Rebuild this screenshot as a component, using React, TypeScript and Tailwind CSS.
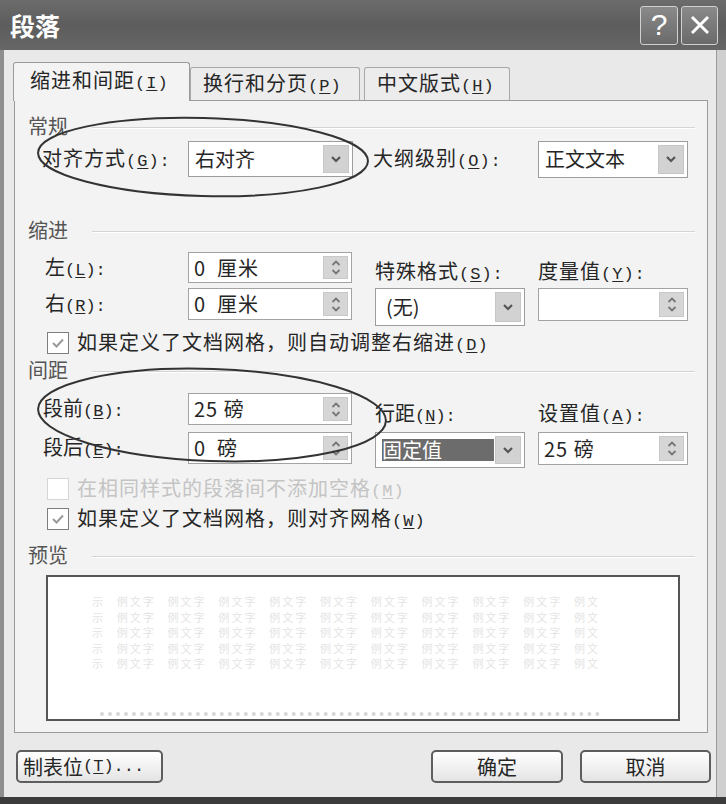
import React from "react";
import clsx from "clsx";

function Key({ k }: { k: string }) {
  return (
    <span className="font-['Liberation_Mono',monospace] text-[17px]">
      (<span className="underline underline-offset-2">{k}</span>)
    </span>
  );
}

function Label({ text, k, colon = true, className }: { text: string; k: string; colon?: boolean; className?: string }) {
  return (
    <span className={clsx("whitespace-nowrap text-[20px] leading-none", className)}>
      {text}
      <Key k={k} />
      {colon && <span className="font-['Liberation_Mono',monospace] text-[17px]">:</span>}
    </span>
  );
}

function DropBtn() {
  return (
    <div className="flex w-[26px] items-center justify-center border border-[#c6c6c6] bg-[#d2d2d2]">
      <svg width="12" height="8" viewBox="0 0 12 8" fill="none" aria-hidden>
        <path d="M2 2l4 4 4-4" stroke="#555" strokeWidth="2.2" />
      </svg>
    </div>
  );
}

function SpinBtn() {
  return (
    <div className="flex w-[25px] flex-col items-center justify-center gap-[3px] border border-[#c8c8c8] bg-[#d6d6d6]">
      <svg width="10" height="6" viewBox="0 0 10 6" fill="none" aria-hidden>
        <path d="M1.5 5L5 1.5 8.5 5" stroke="#777" strokeWidth="1.8" />
      </svg>
      <svg width="10" height="6" viewBox="0 0 10 6" fill="none" aria-hidden>
        <path d="M1.5 1L5 4.5 8.5 1" stroke="#777" strokeWidth="1.8" />
      </svg>
    </div>
  );
}

function Combo({ className, children }: { className: string; children?: React.ReactNode }) {
  return (
    <div className={clsx("flex items-stretch border border-[#9d9d9d] bg-white p-[3px]", className)}>
      <div className="flex flex-1 items-center pl-[3px] text-[20px] leading-none">{children}</div>
      <DropBtn />
    </div>
  );
}

function Spin({ className, value }: { className: string; value?: string }) {
  return (
    <div className={clsx("flex items-stretch border border-[#a3a3a3] bg-white p-[3px]", className)}>
      <div className="flex flex-1 items-center whitespace-pre pl-[2px] text-[20px] leading-none tracking-[1px]">{value}</div>
      <SpinBtn />
    </div>
  );
}

function Section({ title, className }: { title: string; className?: string }) {
  return (
    <div className={clsx("flex h-[24px] items-center pl-[13px] pr-[12px]", className)}>
      <span className="text-[20px] leading-none text-[#555]">{title}</span>
      <div className="ml-[24px] mt-[4px] h-[2px] flex-1 border-t border-b border-t-[#d4d4d4] border-b-white" />
    </div>
  );
}

function Check({ checked, disabled, children, className }: { checked?: boolean; disabled?: boolean; children: React.ReactNode; className?: string }) {
  return (
    <div className={clsx("ml-[32px] flex h-[26px] items-center", className)}>
      <div
        className={clsx(
          "flex h-[22px] w-[22px] items-center justify-center border bg-white",
          disabled ? "border-[#d6d6d6]" : "border-[#7e7e7e]"
        )}
      >
        {checked && (
          <svg width="16" height="14" viewBox="0 0 16 14" fill="none" aria-hidden>
            <path d="M3 7l3.5 3.5L13 3.5" stroke="#9a9a9a" strokeWidth="2" />
          </svg>
        )}
      </div>
      <span className={clsx("ml-[8px] whitespace-nowrap text-[20px] leading-none tracking-[1px]", disabled ? "text-[#c4c4c4]" : "text-[#262626]")}>
        {children}
      </span>
    </div>
  );
}

function Button({ children, className }: { children: React.ReactNode; className: string }) {
  return (
    <button
      type="button"
      className={clsx(
        "flex h-[33px] items-center rounded-[5px] border-2 border-[#5e5e5e] bg-gradient-to-b from-white to-[#e4e4e4] text-[20px] leading-none text-[#262626]",
        className
      )}
    >
      {children}
    </button>
  );
}

// faint sample text in the preview box
const previewGroups = ["示", "例文字", "例文字", "例文字", "例文字", "例文字", "例文字", "例文字", "例文字", "例文字", "例文"];

export default function App() {
  return (
    <div className="relative flex h-[804px] w-[726px] flex-col overflow-hidden bg-[#e9e9e9] font-['Noto_Sans_CJK_SC',sans-serif] text-[#262626]">
      {/* title bar */}
      <div className="flex h-[50px] shrink-0 items-center bg-gradient-to-b from-[#6c6c6c] via-[#5d5d5d] to-[#666] pl-[10px] pr-[8px]">
        <span className="text-[25px] font-bold leading-none text-white">段落</span>
        <div className="ml-auto flex gap-[3px]">
          <div className="flex h-[39px] w-[38px] items-center justify-center rounded-[3px] border border-[#d0d0d0] bg-gradient-to-b from-[#8a8a8a] to-[#6a6a6a] font-['Liberation_Sans',sans-serif] text-[30px] leading-none text-white">
            ?
          </div>
          <div className="flex h-[39px] w-[37px] items-center justify-center rounded-[3px] border border-[#d0d0d0] bg-gradient-to-b from-[#8a8a8a] to-[#6a6a6a]">
            <svg width="22" height="22" viewBox="0 0 22 22" fill="none" aria-hidden>
              <path d="M3 3l16 16M19 3L3 19" stroke="#fff" strokeWidth="3" />
            </svg>
          </div>
        </div>
      </div>

      <div className="flex flex-1">
        {/* body */}
        <div className="flex flex-1 flex-col border-l-4 border-[#8e8e8e]">
          {/* tabs */}
          <div className="relative z-10 -mb-px flex h-[51px] items-end pl-[9px]">
            <div className="flex h-[39px] w-[177px] items-center rounded-t-[3px] border border-b-0 border-[#9a9a9a] bg-[#f3f3f3] pb-[2px] pl-[16px]">
              <Label text="缩进和间距" k="I" colon={false} className="tracking-[1px]" />
            </div>
            <div className="mb-px flex h-[33px] w-[170px] items-center rounded-t-[3px] border border-b-0 border-[#a8a8a8] bg-[#ececec] pl-[12px]">
              <Label text="换行和分页" k="P" colon={false} className="tracking-[1px]" />
            </div>
            <div className="mb-px ml-[4px] flex h-[33px] w-[146px] items-center rounded-t-[3px] border border-b-0 border-[#a8a8a8] bg-[#ececec] pl-[12px]">
              <Label text="中文版式" k="H" colon={false} className="tracking-[1px]" />
            </div>
          </div>

          {/* panel */}
          <div className="ml-[10px] flex h-[633px] w-[694px] flex-col border border-[#9a9a9a] bg-[#f3f3f3]">
            <Section title="常规" className="mt-[13px]" />
            <div className="mt-[3px] flex h-[36px] items-center">
              <div className="ml-[27px] w-[146px]">
                <Label text="对齐方式" k="G" className="tracking-[1px]" />
              </div>
              <Combo className="h-[36px] w-[165px]">右对齐</Combo>
              <div className="ml-[20px] w-[165px]">
                <Label text="大纲级别" k="O" className="tracking-[1px]" />
              </div>
              <Combo className="h-[37px] w-[150px]">正文文本</Combo>
            </div>

            <Section title="缩进" className="mt-[41px]" />
            <div className="mt-[10px] flex h-[31px] items-stretch">
              <div className="ml-[30px] flex w-[143px] items-center">
                <Label text="左" k="L" />
              </div>
              <Spin className="w-[164px]" value="0  厘米" />
              <div className="ml-[23px] flex w-[150px] items-end">
                <Label text="特殊格式" k="S" className="tracking-[1px]" />
              </div>
              <div className="ml-[13px] flex w-[150px] items-end">
                <Label text="度量值" k="Y" className="tracking-[1px]" />
              </div>
            </div>
            <div className="mt-[5px] flex h-[38px] items-start">
              <div className="ml-[30px] flex h-[32px] w-[143px] items-center">
                <Label text="右" k="R" />
              </div>
              <Spin className="h-[32px] w-[164px]" value="0  厘米" />
              <Combo className="ml-[23px] h-[38px] w-[150px]">
                <span className="pl-[4px]">(无)</span>
              </Combo>
              <Spin className="ml-[13px] h-[33px] w-[150px]" />
            </div>
            <Check checked className="mt-[4px]">
              如果定义了文档网格，则自动调整右缩进<Key k="D" />
            </Check>

            <Section title="间距" className="mt-[2px]" />
            <div className="mt-[11px] flex h-[32px] items-stretch">
              <div className="ml-[28px] flex w-[145px] items-center">
                <Label text="段前" k="B" />
              </div>
              <Spin className="w-[164px]" value="25 磅" />
              <div className="ml-[23px] flex w-[150px] items-end">
                <Label text="行距" k="N" />
              </div>
              <div className="ml-[13px] flex w-[150px] items-end">
                <Label text="设置值" k="A" className="tracking-[1px]" />
              </div>
            </div>
            <div className="mt-[7px] flex h-[36px] items-start">
              <div className="ml-[28px] flex h-[32px] w-[145px] items-center">
                <Label text="段后" k="E" />
              </div>
              <Spin className="h-[32px] w-[164px]" value="0  磅" />
              <Combo className="ml-[23px] h-[36px] w-[150px]">
                <span className="flex h-[22px] w-[112px] items-center bg-[#6c6c6c] text-white">固定值</span>
              </Combo>
              <Spin className="ml-[13px] h-[33px] w-[150px]" value="25 磅" />
            </div>
            <Check disabled className="mt-[8px]">
              在相同样式的段落间不添加空格<Key k="M" />
            </Check>
            <Check checked className="mt-[4px]">
              如果定义了文档网格，则对齐网格<Key k="W" />
            </Check>

            <Section title="预览" className="mt-[11px]" />
            <div className="ml-[31px] mt-[8px] flex h-[146px] w-[634px] flex-col border-2 border-[#555] bg-white pl-[44px] pt-[17px]">
              {[0, 1, 2, 3, 4].map((i) => (
                <div key={i} className="flex h-[15.5px] w-[508px] justify-between text-[11px] leading-[15px] text-[#e4e4e4]">
                  {previewGroups.map((g, j) => (
                    <span key={j} className="tracking-[2px]">
                      {g}
                    </span>
                  ))}
                </div>
              ))}
              <div className="mt-auto mb-[1px] ml-[8px] h-[6px] w-[500px] border-t-[4px] border-dotted border-[#d6d6d6]" />
            </div>
          </div>

          {/* buttons */}
          <div className="mt-[17px] flex items-center pr-[5px]">
            <Button className="ml-[12px] w-[147px] pl-[5px]">
              制表位<Key k="T" />
              <span className="font-['Liberation_Mono',monospace] text-[17px]">...</span>
            </Button>
            <Button className="ml-auto w-[132px] justify-center">确定</Button>
            <Button className="ml-[17px] w-[131px] justify-center">取消</Button>
          </div>
        </div>
        {/* right frame */}
        <div className="w-[10px] border-l border-[#9a9a9a] bg-[#cfcfcf]" />
      </div>

      <div className="h-[7px] shrink-0 bg-[#3c3c3c]" />

      {/* hand-drawn annotation ellipses */}
      <svg className="pointer-events-none absolute left-0 top-0" width="726" height="804" fill="none" aria-hidden>
        <ellipse cx="203" cy="157" rx="165" ry="39" stroke="#333" strokeWidth="2" transform="rotate(1.5 203 157)" />
        <ellipse cx="212" cy="415" rx="174" ry="46" stroke="#333" strokeWidth="2" transform="rotate(2 212 415)" />
      </svg>
    </div>
  );
}
